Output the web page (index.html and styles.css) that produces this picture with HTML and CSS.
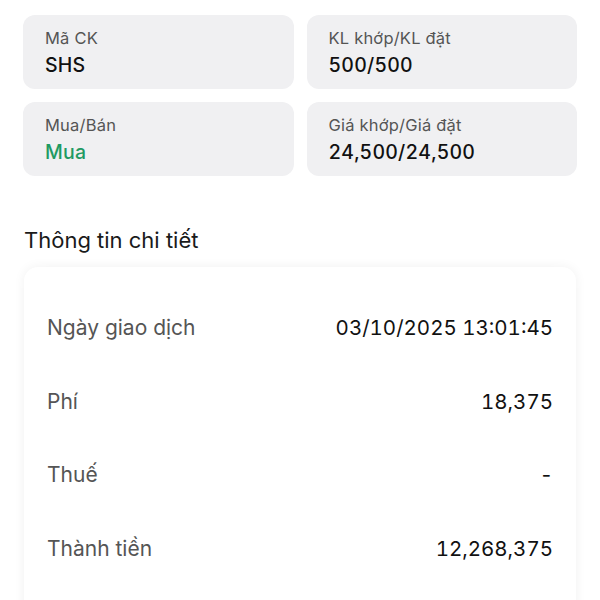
FILE: index.html
```html
<!DOCTYPE html>
<html lang="vi">
<head>
    <meta charset="UTF-8">
    <meta name="viewport" content="width=device-width, initial-scale=1.0">
    <title>Chi tiết lệnh</title>
    <link rel="stylesheet" href="styles.css">
</head>
<body>

    <!-- Order summary -->
    <div class="summary">
        <div class="summary-item">
            <div class="summary-label">Mã CK</div>
            <div class="summary-value">SHS</div>
        </div>
        <div class="summary-item">
            <div class="summary-label">KL khớp/KL đặt</div>
            <div class="summary-value">500/500</div>
        </div>
        <div class="summary-item">
            <div class="summary-label">Mua/Bán</div>
            <div class="summary-value buy">Mua</div>
        </div>
        <div class="summary-item">
            <div class="summary-label">Giá khớp/Giá đặt</div>
            <div class="summary-value">24,500/24,500</div>
        </div>
    </div>

    <!-- Details -->
    <h2 class="section-title">Thông tin chi tiết</h2>
    <div class="detail-card">
        <div class="detail-row">
            <span class="detail-label">Ngày giao dịch</span>
            <span class="detail-value">03/10/2025 13:01:45</span>
        </div>
        <div class="detail-row">
            <span class="detail-label">Phí</span>
            <span class="detail-value">18,375</span>
        </div>
        <div class="detail-row">
            <span class="detail-label">Thuế</span>
            <span class="detail-value">-</span>
        </div>
        <div class="detail-row">
            <span class="detail-label">Thành tiền</span>
            <span class="detail-value">12,268,375</span>
        </div>
    </div>

</body>
</html>
```

FILE: styles.css
```css
html, body {
    height: 100%;
    overflow: hidden;
}
body {
    font-family: Inter, "Noto Sans", sans-serif;
    margin: 0;
    padding: 15px 23px 0 23px;
    background-color: #ffffff;
    color: #111111;
    box-sizing: border-box;
}
.summary {
    display: grid;
    grid-template-columns: 1fr 1fr;
    gap: 13px 13px;
}
.summary-item {
    background-color: #f0f0f2;
    border-radius: 12px;
    height: 74px;
    box-sizing: border-box;
    padding: 12px 22px 0 22px;
}
.summary-label {
    font-size: 16.5px;
    line-height: 22px;
    color: #555555;
    letter-spacing: 0.2px;
}
.summary-value {
    font-size: 19.5px;
    line-height: 32px;
    font-weight: 500;
    color: #111111;
    font-variant-numeric: tabular-nums;
    letter-spacing: 0.2px;
}
.summary-value.buy {
    color: #1f9a63;
}
.section-title {
    font-size: 22px;
    font-weight: 400;
    margin: 50px 0 0 1px;
    line-height: 28px;
    color: #1a1a1a;
}
.detail-card {
    margin: 13px 1px 0 1px;
    background-color: #ffffff;
    border-radius: 14px;
    box-shadow: 0 0 12px rgba(0, 0, 0, 0.06);
    padding: 24px 23px 0 23px;
    height: 380px;
    box-sizing: border-box;
}
.detail-row {
    display: flex;
    justify-content: space-between;
    align-items: center;
    height: 73.5px;
}
.detail-label {
    font-size: 21px;
    color: #555555;
}
.detail-value {
    font-size: 20.5px;
    color: #111111;
    font-variant-numeric: tabular-nums;
}
```
